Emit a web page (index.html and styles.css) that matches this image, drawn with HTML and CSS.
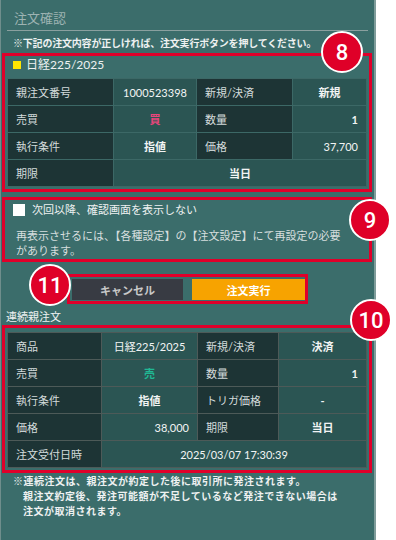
FILE: index.html
```html
<!DOCTYPE html>
<html lang="ja">

<head>
    <meta charset="UTF-8">
    <meta name="viewport" content="width=device-width, initial-scale=1.0">
    <link rel="stylesheet" href="styles.css">
    <title>注文確認</title>
</head>

<body>
    <div class="panel">
        <div class="header">
            <h1 class="header-title">注文確認</h1>
        </div>
        <p class="lead">※下記の注文内容が正しければ、注文実行ボタンを押してください。</p>

        <!-- 注文内容 -->
        <section class="mark-box order-box">
            <div class="order-title"><span class="swatch"></span>日経225/2025</div>
            <div class="grid grid-order">
                <div class="cell label">親注文番号</div>
                <div class="cell value num-plain">1000523398</div>
                <div class="cell label">新規/決済</div>
                <div class="cell value">新規</div>

                <div class="cell label">売買</div>
                <div class="cell value buy">買</div>
                <div class="cell label">数量</div>
                <div class="cell value right">1</div>

                <div class="cell label">執行条件</div>
                <div class="cell value">指値</div>
                <div class="cell label">価格</div>
                <div class="cell value right num-plain">37,700</div>

                <div class="cell label">期限</div>
                <div class="cell value wide">当日</div>
            </div>
        </section>

        <!-- 確認画面 -->
        <section class="mark-box confirm-box">
            <label class="check-row"><span class="check"></span>次回以降、確認画面を表示しない</label>
            <p class="confirm-note">再表示させるには、【各種設定】の【注文設定】にて再設定の必要があります。</p>
        </section>

        <div class="mark-box button-box">
            <button class="btn btn-cancel">キャンセル</button>
            <button class="btn btn-submit">注文実行</button>
        </div>

        <h2 class="sub-title">連続親注文</h2>

        <!-- 連続親注文 -->
        <section class="mark-box chain-box">
            <div class="grid grid-chain">
                <div class="cell label">商品</div>
                <div class="cell value num-plain">日経225/2025</div>
                <div class="cell label">新規/決済</div>
                <div class="cell value">決済</div>

                <div class="cell label">売買</div>
                <div class="cell value sell">売</div>
                <div class="cell label">数量</div>
                <div class="cell value right">1</div>

                <div class="cell label">執行条件</div>
                <div class="cell value">指値</div>
                <div class="cell label">トリガ価格</div>
                <div class="cell value">-</div>

                <div class="cell label">価格</div>
                <div class="cell value right num-plain">38,000</div>
                <div class="cell label">期限</div>
                <div class="cell value">当日</div>

                <div class="cell label">注文受付日時</div>
                <div class="cell value wide num-plain">2025/03/07 17:30:39</div>
            </div>
        </section>

        <p class="foot-note">※連続注文は、親注文が約定した後に取引所に発注されます。<br>親注文約定後、発注可能額が不足しているなど発注できない場合は<br>注文が取消されます。</p>

        <span class="badge badge-8">8</span>
        <span class="badge badge-9">9</span>
        <span class="badge badge-11">11</span>
        <span class="badge badge-10">10</span>
    </div>
</body>

</html>
```

FILE: styles.css
```css
* {
    margin: 0;
    padding: 0;
    box-sizing: border-box;
}

body {
    background-color: #fff;
    font-family: Lato, "Noto Sans CJK JP", sans-serif;
    color: #eef1f1;
}

.panel {
    position: relative;
    width: 376px;
    min-height: 540px;
    background-color: #3b6d6b;
    border-left: 1px solid #6f8e8c;
    border-right: 2px solid #7f9c9a;
}

.header {
    margin: 0 6px;
    padding: 10px 0 4px 7px;
    border-bottom: 1px solid #8aa09f;
}

.header-title {
    font-size: 13px;
    font-weight: normal;
    line-height: 16px;
    color: #9db3b2;
}

.lead {
    padding: 5px 0 0 12px;
    font-size: 10px;
    font-weight: bold;
    line-height: 14px;
    letter-spacing: -0.2px;
    white-space: nowrap;
}

.mark-box {
    border: 3px solid #e0002a;
}

.order-box {
    margin: 3px 2px 0 1px;
}

.order-title {
    display: flex;
    align-items: center;
    height: 22px;
    padding: 0 0 4px 8px;
    font-size: 12px;
    line-height: 18px;
}

.swatch {
    width: 8px;
    height: 8px;
    margin-right: 5px;
    background-color: #ffe600;
}

.grid {
    display: grid;
    gap: 1px;
    margin: 0 2px 2px;
    border: 1px solid #3c6866;
    background-color: #3c6866;
    font-size: 11px;
}

.grid-order {
    grid-template-columns: 105px 82px 95px 1fr;
    grid-auto-rows: 26px;
}

.grid-chain {
    margin-top: 4px;
    grid-template-columns: 93px 95px 80px 1fr;
    grid-auto-rows: 26px;
    border-color: #4d5a58;
    background-color: #4d5a58;
}

.cell {
    display: flex;
    align-items: center;
    padding: 0 8px;
}

.label {
    background-color: #1d3435;
    color: #d3dbdb;
}

.value {
    justify-content: center;
    background-color: #2b5553;
    font-weight: bold;
    color: #f2f4f4;
}

.value.num-plain {
    font-weight: normal;
}

.value.right {
    justify-content: flex-end;
}

.value.wide {
    grid-column: span 3;
}

.buy {
    color: #e8467c;
}

.sell {
    color: #20b894;
}

.confirm-box {
    margin: 5px 2px 0 1px;
    padding-bottom: 1px;
}

.check-row {
    display: flex;
    align-items: center;
    padding: 3px 0 0 8px;
    font-size: 11px;
    line-height: 14px;
}

.check {
    width: 12px;
    height: 12px;
    margin-right: 7px;
    background-color: #fff;
}

.confirm-note {
    max-width: 350px;
    margin-top: 11px;
    padding: 0 12px 0 11px;
    font-size: 11px;
    line-height: 15px;
    color: #d6dede;
}

.button-box {
    display: flex;
    gap: 9px;
    width: 241px;
    margin: 12px auto 0;
    padding: 2px 0 1px 2px;
}

.btn {
    height: 21px;
    border: none;
    font-family: Lato, "Noto Sans CJK JP", sans-serif;
    font-size: 11px;
    font-weight: bold;
}

.btn-cancel {
    width: 111px;
    background-color: #383b43;
    color: #c9c9c9;
}

.btn-submit {
    width: 113px;
    background-color: #f7a300;
    color: #fff;
}

.sub-title {
    margin-top: 6px;
    padding-left: 5px;
    font-size: 11px;
    font-weight: normal;
    line-height: 14px;
}

.chain-box {
    margin: 1px 2px 0 1px;
}

.foot-note {
    padding: 1px 0 0 22px;
    text-indent: -10px;
    font-size: 10px;
    font-weight: bold;
    line-height: 15px;
    letter-spacing: 0.5px;
    white-space: nowrap;
}

.badge {
    position: absolute;
    display: flex;
    justify-content: center;
    align-items: center;
    width: 42px;
    height: 42px;
    border: 2px solid #fff;
    border-radius: 50%;
    background-color: #df0028;
    font-family: Roboto, sans-serif;
    font-size: 22px;
    font-weight: 500;
    color: #fff;
}

.badge-8 {
    left: 320px;
    top: 31px;
}

.badge-9 {
    left: 348px;
    top: 199px;
}

.badge-11 {
    left: 28px;
    top: 264px;
}

.badge-10 {
    left: 349px;
    top: 299px;
}
```
